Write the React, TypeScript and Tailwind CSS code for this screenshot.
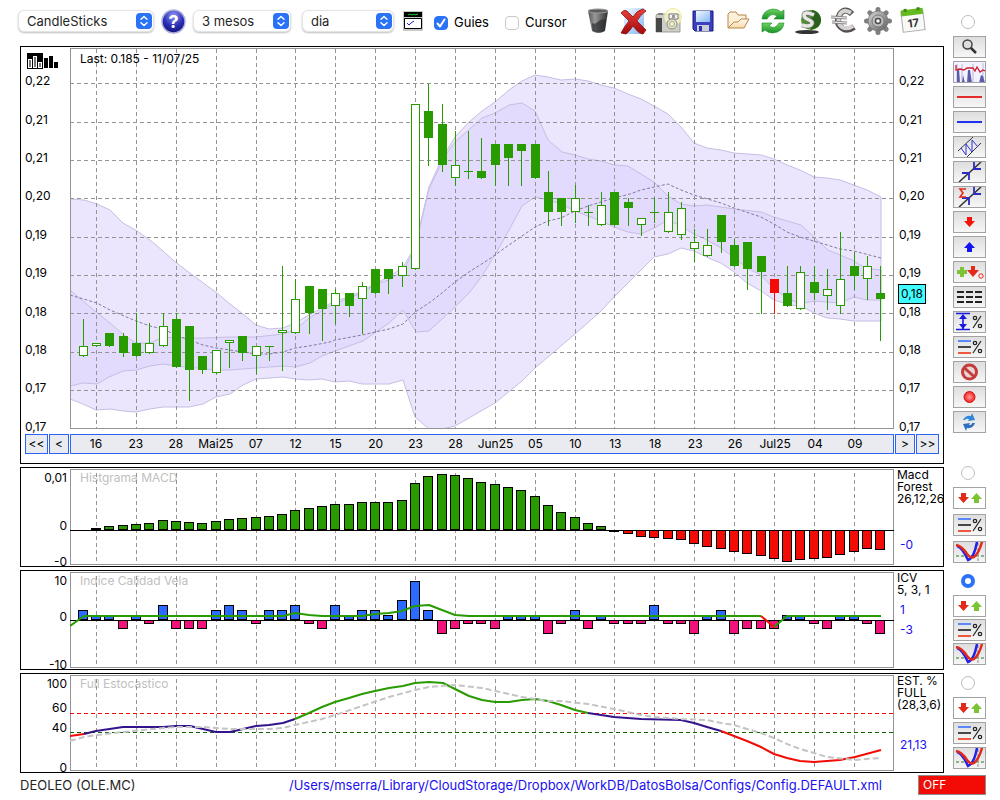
import React, { useState } from 'react';

type CandleKind = 'up' | 'down' | 'red';
type Candle = [high: number, top: number, bottom: number, low: number, kind: CandleKind];

interface Segment {
  color: string;
  points: string;
}

// x of the n-th session, all panes share the same time axis
const sessionX = (index: number) => Math.floor(70 + 13.29 * (index + 1));

const GRID_SESSIONS = Array.from({ length: 20 }, (_, i) => 1 + i * 3);

const DATES = [
  '16', '23', '28', 'Mai25', '07', '12', '15', '20', '23', '28',
  'Jun25', '05', '10', '13', '18', '23', '26', 'Jul25', '04', '09',
];

const PRICES = ['0,22', '0,21', '0,21', '0,20', '0,19', '0,19', '0,18', '0,18', '0,17', '0,17'];
const PRICE_LINES = [83, 122, 160, 198, 237, 275, 313, 352, 390];

const CANDLES: Candle[] = [
  [319, 346, 356, 357, 'up'], [343, 343, 346, 347, 'up'], [333, 333, 346, 347, 'down'],
  [333, 336, 353, 357, 'down'], [313, 343, 356, 357, 'down'], [323, 343, 353, 354, 'up'],
  [313, 326, 346, 347, 'up'], [313, 319, 367, 368, 'down'], [326, 326, 370, 401, 'down'],
  [356, 356, 370, 374, 'down'], [350, 350, 373, 374, 'up'], [340, 340, 343, 368, 'up'],
  [336, 336, 353, 361, 'down'], [346, 346, 356, 374, 'up'], [346, 346, 347, 361, 'down'],
  [266, 330, 333, 371, 'up'], [279, 299, 333, 334, 'up'], [286, 286, 313, 334, 'down'],
  [289, 289, 309, 341, 'down'], [289, 293, 306, 324, 'up'], [293, 293, 306, 317, 'down'],
  [282, 286, 299, 334, 'up'], [269, 269, 293, 294, 'down'], [269, 269, 279, 294, 'down'],
  [262, 266, 276, 287, 'up'], [104, 104, 269, 270, 'up'], [84, 111, 138, 166, 'down'],
  [104, 124, 165, 172, 'down'], [131, 165, 178, 186, 'up'], [131, 171, 172, 179, 'down'],
  [138, 171, 178, 179, 'down'], [144, 144, 165, 186, 'down'], [144, 144, 158, 186, 'down'],
  [144, 144, 151, 186, 'down'], [144, 144, 178, 179, 'down'], [171, 192, 212, 226, 'down'],
  [198, 198, 212, 226, 'down'], [185, 198, 212, 223, 'up'], [205, 212, 213, 226, 'down'],
  [192, 205, 225, 226, 'up'], [192, 192, 225, 226, 'down'], [198, 202, 208, 226, 'down'],
  [218, 218, 225, 236, 'up'], [198, 212, 213, 223, 'down'], [192, 212, 232, 233, 'up'],
  [202, 208, 235, 240, 'up'], [229, 242, 249, 262, 'up'], [229, 245, 256, 257, 'up'],
  [215, 215, 242, 253, 'down'], [239, 245, 266, 267, 'down'], [242, 242, 269, 290, 'down'],
  [256, 256, 272, 314, 'down'], [279, 279, 293, 314, 'red'], [266, 293, 306, 307, 'down'],
  [266, 272, 309, 310, 'up'], [266, 282, 293, 300, 'down'], [269, 289, 296, 310, 'up'],
  [232, 279, 306, 314, 'up'], [252, 266, 276, 290, 'down'], [256, 266, 279, 300, 'up'],
  [266, 293, 299, 341, 'down'],
];

const OUTER_UPPER =
  '70,199 84,200 97,204 110,210 123,223 137,231 150,240 163,251 173,260 187,271 217,293 230,304 243,314 256,325 269,329 283,328 295,323 309,315 322,308 335,301 349,297 362,291 376,283 389,277 403,267 412,252 420,225 429,187 439,165 447,150 455,137 469,122 482,111 495,102 509,90 522,81 535,75 548,77 561,80 575,79 588,81 601,85 614,88 628,94 641,99 654,106 668,114 681,127 694,143 707,148 721,150 734,153 761,155 774,159 787,165 800,170 814,177 827,178 840,180 854,185 867,190 881,197';
const OUTER_LOWER =
  '70,399 83,404 96,410 110,409 123,411 136,412 150,409 163,407 176,407 189,407 203,404 216,397 230,394 243,385 256,379 283,377 295,379 309,380 322,379 335,382 349,381 362,384 389,384 403,380 415,417 429,429 442,429 455,426 495,403 522,381 535,368 548,357 575,334 601,311 614,297 638,273 654,257 668,254 681,248 694,251 713,260 721,263 734,272 747,283 761,291 774,300 787,304 803,307 814,313 827,318 840,319 854,321 881,321';
const INNER_UPPER =
  '70,290 83,301 96,312 110,323 125,336 136,343 150,343 163,337 176,338 203,338 230,337 256,337 283,334 295,330 309,318 330,306 349,298 362,293 376,284 389,280 403,271 412,254 420,227 429,189 439,168 447,153 455,142 482,118 495,113 509,105 522,103 535,111 548,140 562,152 575,155 588,159 601,161 614,165 628,166 641,174 654,182 668,196 681,204 694,206 707,205 721,207 734,209 761,212 774,217 801,225 814,237 828,250 840,255 852,260 862,266 872,269 881,270';
const INNER_LOWER =
  '70,386 83,383 97,384 109,377 123,371 136,370 150,366 163,364 176,366 216,370 230,370 256,368 283,366 295,367 310,363 322,356 335,351 349,346 363,341 376,332 389,323 403,310 416,332 429,331 455,307 469,293 482,276 495,255 509,230 522,206 535,197 548,200 561,204 575,211 588,216 601,221 614,227 628,232 641,234 654,228 668,220 681,226 694,234 707,240 721,248 732,256 747,268 761,275 774,289 787,298 800,304 814,301 840,303 854,297 867,300 881,300';
const MIDDLE =
  '70,295 97,303 110,310 136,321 150,326 163,329 176,335 189,340 203,345 216,348 230,350 256,354 269,354 283,352 295,348 309,346 330,342 335,340 362,335 389,329 403,324 415,312 429,303 442,293 455,282 469,272 488,260 495,255 509,245 522,236 535,227 548,221 561,218 575,211 588,206 601,202 614,198 630,194 641,190 654,187 668,184 681,190 694,195 721,203 734,208 761,217 774,224 787,232 800,237 827,245 840,249 854,251 881,258';

// end of each bar, the first session has none
const MACD = [
  528, 526, 525, 524, 523, 520, 521, 522, 523, 521, 519, 518, 517, 516, 514, 510, 508, 506, 504, 504,
  502, 502, 502, 500, 483, 476, 474, 475, 478, 482, 484, 487, 490, 496, 505, 512, 517, 523, 526, 532,
  534, 537, 538, 539, 540, 544, 547, 549, 552, 554, 556, 559, 562, 560, 559, 558, 555, 552, 549, 550,
];

const ICV = [
  610, 615, 615, 629, 615, 624, 605, 629, 629, 629, 610, 605, 610, 624, 610, 610, 605, 624, 629, 605,
  615, 610, 610, 615, 600, 581, 610, 634, 629, 624, 624, 629, 615, 615, 615, 634, 624, 610, 629, 615,
  624, 624, 624, 605, 624, 624, 634, 615, 610, 634, 629, 629, 629, 615, 615, 624, 629, 615, 615, 624, 634,
];

const ICV_LINE: Segment[] = [
  { color: '#289b00', points: '70,626 84,616 283,616 295,613 309,615 322,616 362,616 375,614 389,613 402,611 415,606 429,605 442,610 455,615 469,616 761,616' },
  { color: '#f20c05', points: '761,616 774,627' },
  { color: '#289b00', points: '774,627 787,616 881,616' },
];

const STOCHASTIC: Segment[] = [
  { color: '#f20c05', points: '70,736 84,734' },
  { color: '#33148c', points: '84,734 96,731 123,727 163,727 176,726 190,726 203,729 216,732 230,732 243,729 256,726 269,725 283,723 295,719' },
  { color: '#289b00', points: '295,719 309,713 322,707 335,702 349,698 362,694 375,691 389,688 403,686 415,683 429,682 443,683 455,689 469,696 482,700 495,702 509,702 522,700 535,699 548,701 561,705 575,710 588,713' },
  { color: '#33148c', points: '588,713 601,715 614,717 641,719 681,720 694,723 707,727 721,731' },
  { color: '#f20c05', points: '721,731 734,736 747,741 761,747 774,754 787,758 800,761 814,762 840,760 855,757 881,750' },
];

const STOCHASTIC_SIGNAL =
  '70,741 84,737 97,735 123,732 163,728 176,727 203,727 230,729 256,729 269,729 283,728 295,725 322,719 335,715 362,706 389,697 415,690 429,687 455,685 482,688 522,697 548,701 561,701 588,704 614,709 641,715 654,717 681,719 707,720 721,723 734,725 747,729 761,733 774,738 787,744 800,749 814,753 827,757 854,760 881,758';

const reversePoints = (points: string) => points.split(' ').reverse().join(' ');

/* ---------- plots ---------- */

const VerticalGrid: React.FC<{ from: number; to: number }> = ({ from, to }) => (
  <g stroke="#949494" strokeDasharray="4 3" shapeRendering="crispEdges">
    {GRID_SESSIONS.map((session) => (
      <line key={session} x1={sessionX(session) + 0.5} x2={sessionX(session) + 0.5} y1={from} y2={to} />
    ))}
  </g>
);

const Lines: React.FC<{ segments: Segment[] }> = ({ segments }) => (
  <g fill="none" strokeWidth="2" strokeLinejoin="round">
    {segments.map((segment) => (
      <polyline key={segment.points} points={segment.points} stroke={segment.color} />
    ))}
  </g>
);

const Bars: React.FC<{ values: number[]; first: number; zero: number; up: string; down: string }> = ({
  values, first, zero, up, down,
}) => (
  <g stroke="#000" shapeRendering="crispEdges">
    {values.map((value, i) => (
      <rect
        key={i}
        x={sessionX(i + first) - 4.5}
        y={Math.min(value, zero) + 0.5}
        width={9}
        height={Math.max(Math.abs(value - zero) - 1, 0.5)}
        fill={value < zero ? up : down}
      />
    ))}
    <line x1="70" x2="895" y1={zero + 0.5} y2={zero + 0.5} />
  </g>
);

const PricePlot: React.FC = () => (
  <svg className="relative block h-full w-full" viewBox="70 48 824 381" preserveAspectRatio="none">
    <polygon points={`${OUTER_UPPER} ${reversePoints(OUTER_LOWER)}`} fill="#ebe6fe" stroke="#c6bee3" />
    <polygon points={`${INNER_UPPER} ${reversePoints(INNER_LOWER)}`} fill="#e3dbfd" stroke="#c6bee3" />
    <VerticalGrid from={49} to={429} />
    <g stroke="#949494" strokeDasharray="4 3" shapeRendering="crispEdges">
      {PRICE_LINES.map((y) => (
        <line key={y} x1="70" x2="894" y1={y + 0.5} y2={y + 0.5} />
      ))}
    </g>
    <polyline points={MIDDLE} fill="none" stroke="#82799c" strokeDasharray="3 2" />
    <g shapeRendering="crispEdges">
      {CANDLES.map(([high, top, bottom, low, kind], i) => {
        const x = sessionX(i);
        const color = kind === 'red' ? '#f20c05' : '#289b00';
        return (
          <g key={i}>
            <rect x={x} y={high} width={1} height={low - high} fill={color} />
            <rect x={x - 4} y={top} width={9} height={bottom - top} fill={color} />
            {kind === 'up' && <rect x={x - 3} y={top + 1} width={7} height={bottom - top - 2} fill="#fff" />}
          </g>
        );
      })}
    </g>
    <rect x="70.5" y="48.5" width="823" height="380" fill="none" stroke="#949494" />
  </svg>
);

const MacdPlot: React.FC = () => (
  <svg className="relative block h-full w-full" viewBox="70 469 824 96" preserveAspectRatio="none">
    <VerticalGrid from={473} to={565} />
    <rect x="70.5" y="469.5" width="823" height="95" fill="none" stroke="#949494" />
    <Bars values={MACD} first={1} zero={530} up="#289b00" down="#f20c05" />
  </svg>
);

const IcvPlot: React.FC = () => (
  <svg className="relative block h-full w-full" viewBox="70 572 824 96" preserveAspectRatio="none">
    <VerticalGrid from={576} to={668} />
    <rect x="70.5" y="572.5" width="823" height="95" fill="none" stroke="#949494" />
    <Bars values={ICV} first={0} zero={620} up="#2b6bff" down="#f2127b" />
    <Lines segments={ICV_LINE} />
  </svg>
);

const StochasticPlot: React.FC = () => (
  <svg className="relative block h-full w-full" viewBox="70 675 824 96" preserveAspectRatio="none">
    <VerticalGrid from={679} to={771} />
    <rect x="70.5" y="675.5" width="823" height="95" fill="none" stroke="#949494" />
    <line x1="70" x2="894" y1="713.5" y2="713.5" stroke="#f20c05" strokeDasharray="4 3" shapeRendering="crispEdges" />
    <line x1="70" x2="894" y1="732.5" y2="732.5" stroke="#0f6400" strokeDasharray="4 3" shapeRendering="crispEdges" />
    <Lines segments={STOCHASTIC} />
    <polyline points={STOCHASTIC_SIGNAL} fill="none" stroke="#c4c4c4" strokeWidth="2" strokeDasharray="6 3" />
  </svg>
);

/* ---------- panels ---------- */

const PriceAxis: React.FC<{ className: string }> = ({ className }) => (
  <div className={`h-[381px] w-[49px] shrink-0 pt-[14px] ${className}`}>
    <div className="grid h-96 grid-rows-10 items-center">
      {PRICES.map((price, i) => (
        <span key={i}>{price}</span>
      ))}
    </div>
  </div>
);

const NavButton: React.FC<{ label: string; wide?: boolean; title: string }> = ({ label, wide, title }) => (
  <button
    title={title}
    className={`h-5 shrink-0 border border-[#2b63f2] bg-[#e9ebf0] text-center leading-4 ${wide ? 'w-[23px]' : 'w-5'}`}
  >
    {label}
  </button>
);

const PricePanel: React.FC = () => (
  <section className="border border-black pt-px pb-[9px]">
    <div className="relative flex">
      <svg className="absolute top-[5px] left-[6px]" width="32" height="16" viewBox="0 0 32 16">
        <path d="M0 0h16v16H0z" />
        <path d="M1 6h4v9H1zM6 3h4v12H6zM11 9h4v6h-4z" fill="#fff" />
        <path d="M2 7h2v7H2zM7 4h2v10H7zM12 10h2v4h-2z" fill="#777" />
        <path d="M17 5h4v10h-4zM22 3h4v12h-4zM27 9h4v6h-4z" />
      </svg>
      <PriceAxis className="pl-1" />
      <div className="relative h-[381px] min-w-0 flex-1">
        <PricePlot />
        <span className="absolute top-[3px] left-[10px]">Last: 0.185 - 11/07/25</span>
      </div>
      <PriceAxis className="pl-[5px]" />
      <span className="absolute top-[236px] right-[17px] h-5 w-7 border border-black bg-[#40fdff] text-center leading-[18px]">
        0,18
      </span>
    </div>
    <div className="relative mt-[5px] flex gap-px px-1">
      <NavButton label="<<" title="Primer" wide />
      <NavButton label="<" title="Anterior" />
      <div className="grid h-5 min-w-0 flex-1 grid-cols-20 border border-[#2b63f2] bg-[#e9ebf0] pr-[18px] pl-[5px] leading-[18px]">
        {DATES.map((date, i) => (
          <span key={i} className="flex justify-center whitespace-nowrap">{date}</span>
        ))}
      </div>
      <NavButton label=">" title="Següent" />
      <NavButton label=">>" title="Darrer" wide />
    </div>
  </section>
);

interface IndicatorProps {
  title: string;
  axis: React.ReactNode;
  legend: React.ReactNode;
  children: React.ReactNode;
}

const IndicatorPanel: React.FC<IndicatorProps> = ({ title, axis, legend, children }) => (
  <section className="flex h-[100px] border border-black py-px">
    <div className="h-24 w-[49px] shrink-0 pt-px pr-[3px] text-right leading-4">{axis}</div>
    <div className="relative h-24 min-w-0 flex-1">
      <h2 className="absolute top-px left-[10px] leading-4 text-[#c0c0c0]">{title}</h2>
      {children}
    </div>
    <div className="w-[49px] shrink-0 overflow-hidden pl-[3px] leading-3 whitespace-nowrap">{legend}</div>
  </section>
);

/* ---------- toolbar ---------- */

const Picker: React.FC<{ label: string; value: string; className: string }> = ({ label, value, className }) => (
  <div className={`relative h-[22px] shrink-0 ${className}`}>
    <select
      aria-label={label}
      className="block h-full w-full appearance-none rounded-md border border-[#e4e4e4] bg-white pl-2 text-[13px] leading-5 text-[#262626] shadow-[0_1px_2px_rgba(0,0,0,0.25)]"
    >
      <option>{value}</option>
    </select>
    <svg className="pointer-events-none absolute top-[3px] right-[2px]" width="16" height="16" viewBox="0 0 16 16">
      <rect width="16" height="16" rx="4" fill="#2a72f8" />
      <path d="M5 6.3 8 3.5l3 2.8M5 9.7l3 2.8 3-2.8" fill="none" stroke="#fff" strokeWidth="1.5" strokeLinecap="round" strokeLinejoin="round" />
    </svg>
  </div>
);

const CheckOption: React.FC<{ id: string; label: string; initial: boolean }> = ({ id, label, initial }) => {
  const [checked, setChecked] = useState<boolean>(initial);

  return (
    <div className="flex shrink-0 items-center gap-[6px] pt-1 text-[13px]">
      <span className="relative block size-[14px]">
        <input
          id={id}
          type="checkbox"
          checked={checked}
          onChange={() => setChecked(!checked)}
          className="block size-[14px] appearance-none rounded-[4px] border border-[#c8c8c8] bg-white checked:border-[#2a72f8] checked:bg-[#2a72f8]"
        />
        {checked && (
          <svg className="pointer-events-none absolute inset-0" width="14" height="14" viewBox="0 0 14 14">
            <path d="m3.5 7.5 2.5 3 4.5-7" fill="none" stroke="#fff" strokeWidth="2" strokeLinecap="round" strokeLinejoin="round" />
          </svg>
        )}
      </span>
      <label htmlFor={id}>{label}</label>
    </div>
  );
};

const Gradients: React.FC = () => (
  <svg width="0" height="0" className="absolute" aria-hidden="true">
    <defs>
      <linearGradient id="steel" x1="0" x2="1">
        <stop offset="0" stopColor="#555" />
        <stop offset="0.35" stopColor="#999" />
        <stop offset="1" stopColor="#2d2d2d" />
      </linearGradient>
      <linearGradient id="chrome" x1="0" y1="0" x2="1" y2="1">
        <stop offset="0" stopColor="#d8d8d8" />
        <stop offset="0.5" stopColor="#9a9a9a" />
        <stop offset="1" stopColor="#5c5c5c" />
      </linearGradient>
      <linearGradient id="green" x1="0" y1="0" x2="0" y2="1">
        <stop offset="0" stopColor="#6fd45f" />
        <stop offset="1" stopColor="#16922a" />
      </linearGradient>
      <linearGradient id="folder" x1="0" y1="0" x2="0" y2="1">
        <stop offset="0" stopColor="#fffaf0" />
        <stop offset="1" stopColor="#f8d9a8" />
      </linearGradient>
      <linearGradient id="sky" x1="0" y1="0" x2="1" y2="1">
        <stop offset="0" stopColor="#f2f9ff" />
        <stop offset="1" stopColor="#86b7f5" />
      </linearGradient>
      <linearGradient id="cross" x1="0" y1="0" x2="0" y2="1">
        <stop offset="0" stopColor="#e9423c" />
        <stop offset="1" stopColor="#a30808" />
      </linearGradient>
      <radialGradient id="help" cx="0.5" cy="0.25" r="0.75">
        <stop offset="0" stopColor="#8f96f2" />
        <stop offset="0.6" stopColor="#2a2db4" />
        <stop offset="1" stopColor="#15157a" />
      </radialGradient>
      <radialGradient id="dot">
        <stop offset="0" stopColor="#ff9c9c" />
        <stop offset="1" stopColor="#f02020" />
      </radialGradient>
    </defs>
  </svg>
);

const TOOLS: { title: string; icon: React.ReactNode }[] = [
  {
    title: 'Paperera',
    icon: (
      <>
        <path d="M4 4h20l-3 20q-7 4-13 0z" fill="url(#steel)" />
        <path d="M8 16q3 2 7-2 3-3 7-1l-1.500 11q-6 3-12 0z" fill="#25272b" opacity="0.65" />
        <ellipse cx="14" cy="4" rx="10" ry="2" fill="#5c5c5c" stroke="#9a9a9a" />
      </>
    ),
  },
  {
    title: 'Esborrar',
    icon: (
      <>
        <path d="M5 1h20v26H5z" fill="url(#sky)" />
        <path d="M2 6q3-4 6-2l6 6q4-7 10-8l3 2q-6 4-9 10l9 9-3 4q-4 0-10-8-4 6-7 8l-5-1q3-6 8-12z" fill="url(#cross)" stroke="#8c0f0f" strokeWidth="0.8" />
      </>
    ),
  },
  {
    title: 'Captura',
    icon: (
      <>
        <path d="M2 9q0-2 2-2h20q2 0 2 2v16H2z" fill="#cdcdca" stroke="#8b8b88" strokeWidth="0.8" />
        <path d="M2 11h6v14H2z" fill="#474747" />
        <path d="M4 6h5v2H4z" fill="#888" />
        <circle cx="19" cy="10" r="8.500" fill="#fdfbd0" fillOpacity="0.7" stroke="#eeeaa0" />
        <path d="M15 7h9v5h-9z" fill="#f6f6f0" stroke="#777" />
        <path d="M18 8h3v3h-3z" fill="#999" />
        <circle cx="18" cy="17" r="5" fill="#e4e3c9" stroke="#8c8b7b" />
        <circle cx="18" cy="17" r="2.500" fill="#f5f2bd" stroke="#aaa" />
      </>
    ),
  },
  {
    title: 'Desar',
    icon: (
      <>
        <path d="M4 4h20v20H6l-2-2z" fill="#3a3fc0" stroke="#171a7b" />
        <path d="M7 4h14v11H7z" fill="url(#sky)" />
        <path d="M8 18h12v6H8z" fill="#c9cbd6" />
        <path d="M10 19h3v5h-3z" fill="#2b2fae" />
      </>
    ),
  },
  {
    title: 'Obrir',
    icon: (
      <g stroke="#b8864a" strokeLinejoin="round">
        <path d="M4 21V7l2-2h6l2 3h8v5" fill="#fdf0d8" />
        <path d="m4 21 6-6h4l3-3h8l-5 9z" fill="url(#folder)" />
      </g>
    ),
  },
  {
    title: 'Refrescar',
    icon: (
      <g fill="url(#green)" stroke="#168a22" strokeWidth="0.6">
        <path d="M3 12q1-9 11-10 5 0 8 3l3-2v9H15l3-3q-6-4-10 3z" />
        <path d="M25 16q-1 9-11 10-5 0-8-3l-3 2v-9h10l-3 3q6 4 10-3z" />
      </g>
    ),
  },
  {
    title: 'Cartera',
    icon: (
      <>
        <ellipse cx="13" cy="25" rx="12" ry="2" fill="#333" />
        <circle cx="17" cy="13" r="10" fill="#4c9628" />
        <path d="M18 3a10 10 0 0 1 6 17l-7 3z" fill="#28611a" />
        <path d="M20 8q-9-4-10 0 0 3 5 5t2 5q-3 2-9 0" fill="none" stroke="#6e6e6e" strokeWidth="5" />
        <path d="M20 8q-9-4-10 0 0 3 5 5t2 5q-3 2-9 0" fill="none" stroke="#e6e6e2" strokeWidth="3.500" />
      </>
    ),
  },
  {
    title: 'Euro',
    icon: (
      <>
        <path d="M23 7q-7-7-12 0-5 9 2 14 5 4 12-1" fill="none" stroke="#55504f" strokeWidth="6" />
        <path d="M22 6q-7-5-11 1-4 9 2 13 5 3 11-1" fill="none" stroke="#d5d2d2" strokeWidth="4" />
        <path d="m2 10 16 1M3 15l15 1" stroke="#8c8888" strokeWidth="3" />
        <path d="m2 10 16 1M3 15l15 1" stroke="#eee" strokeWidth="1.200" />
      </>
    ),
  },
  {
    title: 'Configuració',
    icon: (
      <>
        <g stroke="#7f7f7f" strokeWidth="5" strokeLinecap="round">
          <path d="M14 2.500v23M2.500 14h23M5.800 5.800l16.400 16.400M22.200 5.800 5.800 22.200" />
        </g>
        <circle cx="14" cy="14" r="10" fill="url(#chrome)" stroke="#777" strokeWidth="0.8" />
        <circle cx="14" cy="14" r="6" fill="#bbb" stroke="#7c7c7c" />
        <circle cx="14" cy="14" r="2.500" fill="#fff" stroke="#4c4c4c" strokeWidth="1.500" />
      </>
    ),
  },
  {
    title: 'Calendari',
    icon: (
      <g transform="rotate(-7 14 14)">
        <path d="M3 4h22v20H3z" fill="#f9f9f9" stroke="#aaa" />
        <path d="M3 2h22v6H3z" fill="#65ba20" />
        <path d="M6 1h3v3H6zM19 1h3v3h-3z" fill="#3c8811" />
        <text x="14" y="20" textAnchor="middle" fontSize="11" fontWeight="700" fill="#333">17</text>
      </g>
    ),
  },
];

const Toolbar: React.FC = () => (
  <header className="flex h-[46px] items-center pb-1">
    <Picker label="Tipus" value="CandleSticks" className="w-[136px]" />
    <button title="Ajuda" className="mx-[7px] shrink-0">
      <svg width="25" height="25" viewBox="0 0 25 25">
        <circle cx="12.500" cy="12.500" r="11.500" fill="url(#help)" stroke="#aeb0da" strokeWidth="1.500" />
        <text x="12.500" y="19" textAnchor="middle" fontSize="18" fontWeight="700" fill="#fff">?</text>
      </svg>
    </button>
    <Picker label="Període" value="3 mesos" className="w-[98px]" />
    <Picker label="Interval" value="dia" className="ml-[11px] w-[92px]" />
    <button title="Indicadors" className="ml-[9px] shrink-0">
      <svg width="20" height="20" viewBox="0 0 20 20">
        <path d="M0 0h20v20H0z" fill="#c8c8c8" />
        <path d="M1 1h18v5H1z" />
        <path d="m5 4 2-1 2 1 2-1 1 1 3-1" fill="none" stroke="#1fcf1f" />
        <path d="M1.500 7.500h17v10h-17z" fill="#fff" stroke="#000" />
        <path d="m4 12 2 2 2-2 3-2" fill="none" stroke="#2020e0" />
      </svg>
    </button>
    <div className="ml-[11px] flex gap-4">
      <CheckOption id="guies" label="Guies" initial />
      <CheckOption id="cursor" label="Cursor" initial={false} />
    </div>
    <div className="ml-auto flex gap-[7px] pr-[17px]">
      {TOOLS.map((tool) => (
        <button key={tool.title} title={tool.title}>
          <svg width="28" height="28" viewBox="0 0 28 28">{tool.icon}</svg>
        </button>
      ))}
    </div>
  </header>
);

/* ---------- side rail ---------- */

const Percent: React.FC = () => (
  <g fill="none" stroke="#222" strokeWidth="1.200">
    <path d="m19 16 8-12" />
    <circle cx="21" cy="6" r="1.700" />
    <circle cx="26" cy="14" r="1.700" />
  </g>
);

const levelsIcon = (
  <>
    <path d="M4 4h13" stroke="#2b6bff" strokeWidth="1.500" />
    <path d="M4 10h13" stroke="#111" strokeWidth="1.500" />
    <path d="M4 16h13" stroke="#f0583e" strokeWidth="2" />
    <Percent />
  </>
);

const arrowsIcon = (
  <>
    <path d="M7 5h5v4h3l-5.500 6L4 9h3z" fill="#e32a1a" />
    <path d="M20 15h5v-4h3l-5.500-6-5.500 6h3z" fill="#7cc436" />
  </>
);

const crossingIcon = (
  <>
    <path d="M2 14h28" stroke="#2f7d26" strokeDasharray="3 2" />
    <path d="M24 1v19" stroke="#888" strokeDasharray="3 2" />
    <path d="M3 4q5 1 11 14 6-2 9-18" fill="none" stroke="#2222e8" strokeWidth="2.500" />
    <path d="M2 3q6 1 11 9 4 5 7 3 5-4 8-15" fill="none" stroke="#e32a1a" strokeWidth="2.500" />
  </>
);

const crossArrows = (
  <>
    <path d="M5 20 27 0" stroke="#333" strokeWidth="1.500" />
    <path d="M8 11h7v7M27 7h-7V0" fill="none" stroke="#2c2cc4" strokeWidth="1.800" />
  </>
);

const DRAWING_TOOLS: { title: string; icon: React.ReactNode }[] = [
  {
    title: 'Zoom',
    icon: (
      <>
        <path d="m16 10 6 6" stroke="#333" strokeWidth="2.500" />
        <circle cx="13.500" cy="7.500" r="4.500" fill="#ddd" stroke="#444" strokeWidth="1.500" />
      </>
    ),
  },
  {
    title: 'Volum',
    icon: (
      <>
        <path d="M0 0h31v20H0z" fill="#f3f2ff" />
        <path d="M3 2v18M8 2v18M19 2v18M29 1v20" stroke="#b7b7e2" />
        <path d="M3 21V9l2-3 1 15zM8 21l1-8 2 8zM13 21l1-13h2l2 13zM25 21l2-8 2 1 2 7z" fill="#5a5ca8" />
        <path d="M2 3v5l4-1 4 1 3-2h6l2 3 2-4 3 5 3-2 2 1" fill="none" stroke="#d3192d" strokeWidth="1.300" />
      </>
    ),
  },
  { title: 'Línia vermella', icon: <path d="M3 10h25" stroke="#e52b2b" strokeWidth="2" /> },
  { title: 'Línia blava', icon: <path d="M3 10h25" stroke="#2430f0" strokeWidth="2" /> },
  {
    title: 'Canal',
    icon: (
      <>
        <path d="M4 14 19 0M13 20 27 6" stroke="#333" />
        <path d="m7 11 5 7V7l6 8V3l6 7" fill="none" stroke="#3434d8" />
      </>
    ),
  },
  { title: 'Tendència', icon: crossArrows },
  {
    title: 'Regressió',
    icon: (
      <>
        {crossArrows}
        <path d="M12 2H6l3 4-3 4h6" fill="none" stroke="#e32a1a" strokeWidth="1.600" />
      </>
    ),
  },
  { title: 'Venda', icon: <path d="M13 5h5v4h3l-5.500 6L10 9h3z" fill="#f01508" /> },
  { title: 'Compra', icon: <path d="M13 15h5v-4h3l-5.500-6-5.500 6h3z" fill="#1414f0" /> },
  {
    title: 'Senyals',
    icon: (
      <>
        <path d="M6 5h4v3h3v4h-3v3H6v-3H3V8h3z" fill="#7cc436" />
        <path d="M17 4h4v4h4l-6 7-6-7h4z" fill="#e32a1a" />
        <circle cx="27" cy="14" r="2.200" fill="none" stroke="#e32a1a" />
      </>
    ),
  },
  { title: 'Nivells', icon: <path d="M3 5h25M3 10h25M3 15h25" stroke="#222" strokeWidth="1.800" strokeDasharray="7 2" /> },
  {
    title: 'Rang',
    icon: (
      <>
        <path d="M2 1.500h14M2 17.500h14M9 3v14" stroke="#1b1be0" strokeWidth="1.600" />
        <path d="m5 7 4-5 4 5zM5 12l4 5 4-5z" fill="#1b1be0" />
        <Percent />
      </>
    ),
  },
  { title: 'Percentatges', icon: levelsIcon },
  {
    title: 'Prohibit',
    icon: (
      <>
        <circle cx="15.500" cy="10" r="7" fill="#e8d4d4" stroke="#c53c3c" strokeWidth="3" />
        <path d="m10.500 6 10 9" stroke="#c53c3c" strokeWidth="3" />
      </>
    ),
  },
  { title: 'Gravar', icon: <circle cx="15.500" cy="10" r="5.500" fill="url(#dot)" stroke="#d71515" /> },
  {
    title: 'Actualitzar',
    icon: (
      <>
        <path d="M9 8q3-5 8-4l1-3 3 7-7 1 1-2q-3-1-4 1z" fill="#2f86da" />
        <path d="M21 11q-2 6-8 5l-1 3-3-7 7-1-1 2q3 0 3-2z" fill="#2f6fc0" />
      </>
    ),
  },
];

const RailButton: React.FC<{ title: string; plain?: boolean; children: React.ReactNode }> = ({ title, plain, children }) => (
  <button
    title={title}
    className={`block h-[22px] w-[33px] shrink-0 overflow-hidden border border-[#a3a3a3] ${
      plain ? 'bg-white' : 'bg-linear-to-b from-[#dedede] to-[#f6f6f6]'
    }`}
  >
    <svg className="block" width="31" height="20" viewBox="0 0 31 20">{children}</svg>
  </button>
);

interface RailGroupProps {
  name: string;
  selected: string;
  onSelect: (name: string) => void;
  className: string;
  children: React.ReactNode;
}

const RailGroup: React.FC<RailGroupProps> = ({ name, selected, onSelect, className, children }) => (
  <div className="flex flex-col gap-[7px]">
    <input
      type="radio"
      name="pane"
      aria-label={name}
      checked={selected === name}
      onChange={() => onSelect(name)}
      className="ml-2 block size-[14px] appearance-none rounded-full border border-[#bdbdbd] bg-white checked:border-[4px] checked:border-[#2a72f8]"
    />
    <div className={`flex flex-col ${className}`}>{children}</div>
  </div>
);

const IndicatorButtons: React.FC = () => (
  <>
    <RailButton title="Senyals" plain>{arrowsIcon}</RailButton>
    <RailButton title="Nivells">{levelsIcon}</RailButton>
    <RailButton title="Creuaments">{crossingIcon}</RailButton>
  </>
);

const SideRail: React.FC = () => {
  const [pane, setPane] = useState<string>('ICV');

  return (
    <aside className="flex w-[33px] shrink-0 flex-col gap-[11px] pt-[15px]">
      <div className="h-[440px]">
        <RailGroup name="Preu" selected={pane} onSelect={setPane} className="gap-[3px]">
          {DRAWING_TOOLS.map((tool) => (
            <RailButton key={tool.title} title={tool.title}>{tool.icon}</RailButton>
          ))}
        </RailGroup>
      </div>
      <RailGroup name="MACD" selected={pane} onSelect={setPane} className="gap-[5px]">
        <IndicatorButtons />
      </RailGroup>
      <RailGroup name="ICV" selected={pane} onSelect={setPane} className="gap-[2px]">
        <IndicatorButtons />
      </RailGroup>
      <RailGroup name="Estocastic" selected={pane} onSelect={setPane} className="gap-[3px]">
        <IndicatorButtons />
      </RailGroup>
    </aside>
  );
};

export default function App() {
  return (
    <div className="min-h-screen bg-white font-['Inter',sans-serif] text-xs text-black">
      <Gradients />
      <div className="flex gap-[9px] pr-[14px] pl-[18px]">
        <main className="min-w-0 flex-1">
          <Toolbar />
          <div className="flex flex-col gap-[3px] pl-[2px]">
            <PricePanel />
            <IndicatorPanel
              title="Histgrama MACD"
              axis={
                <>
                  <p className="h-12">0,01</p>
                  <p className="h-9">0</p>
                  <p className="h-4">-0</p>
                </>
              }
              legend={
                <>
                  <p>Macd</p>
                  <p>Forest</p>
                  <p>26,12,26</p>
                  <p className="mt-8 pl-[3px] leading-4 text-[#2010f0]">-0</p>
                </>
              }
            >
              <MacdPlot />
            </IndicatorPanel>
            <IndicatorPanel
              title="Indice Calidad Vela"
              axis={
                <>
                  <p className="h-9">10</p>
                  <p className="h-12">0</p>
                  <p className="h-4">-10</p>
                </>
              }
              legend={
                <>
                  <p>ICV</p>
                  <p>5, 3, 1</p>
                  <p className="mt-1 pl-[3px] leading-5 text-[#2010f0]">1</p>
                  <p className="pl-[3px] leading-5 text-[#2010f0]">-3</p>
                </>
              }
            >
              <IcvPlot />
            </IndicatorPanel>
            <IndicatorPanel
              title="Full Estocastico"
              axis={
                <>
                  <p className="h-6">100</p>
                  <p className="h-5">60</p>
                  <p className="h-10">40</p>
                  <p className="h-4">0</p>
                </>
              }
              legend={
                <>
                  <p>EST. %</p>
                  <p>FULL</p>
                  <p>(28,3,6)</p>
                  <p className="mt-6 pl-[3px] leading-5 text-[#2010f0]">21,13</p>
                </>
              }
            >
              <StochasticPlot />
            </IndicatorPanel>
          </div>
        </main>
        <SideRail />
      </div>
      <footer className="flex items-center justify-between pt-[2px] pr-[14px] pl-5 text-[13px] leading-5">
        <span className="text-[#262626]">DEOLEO (OLE.MC)</span>
        <div className="flex gap-9">
          <span className="text-[#2010f0]">
            /Users/mserra/Library/CloudStorage/Dropbox/WorkDB/DatosBolsa/Configs/Config.DEFAULT.xml
          </span>
          <button className="h-5 w-[68px] border border-[#8c8c8c] bg-[#f20c05] pl-1 text-left text-xs text-white">OFF</button>
        </div>
      </footer>
    </div>
  );
}
